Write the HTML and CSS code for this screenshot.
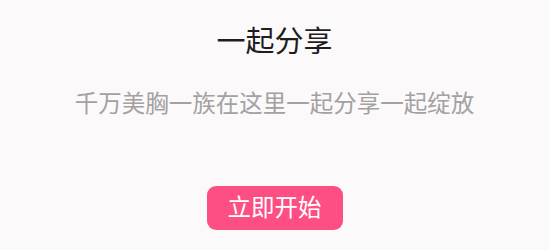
FILE: index.html
```html
<!DOCTYPE html>
<html lang="zh">
<head>
<meta charset="utf-8">
<link rel="stylesheet" href="styles.css">
</head>
<body>
<main class="page">
  <h1 class="title">一起分享</h1>
  <p class="subtitle">千万美胸一族在这里一起分享一起绽放</p>
  <button class="start">立即开始</button>
</main>
</body>
</html>
```
FILE: styles.css
```css
html, body {
  margin: 0;
  padding: 0;
  background: #fcf9fa;
}
body {
  width: 549px;
  height: 250px;
  overflow: hidden;
  font-family: Roboto, "Noto Sans CJK SC", sans-serif;
}
.page {
  display: flex;
  flex-direction: column;
  align-items: center;
  padding-top: 26px;
}
.title {
  margin: 0;
  font-size: 29px;
  line-height: 32px;
  font-weight: 400;
  color: #1e1e1e;
}
.subtitle {
  margin: 30px 0 0;
  font-size: 23.5px;
  line-height: 32px;
  font-weight: 400;
  color: #a3a1a2;
}
.start {
  margin-top: 66px;
  width: 136px;
  height: 44px;
  border: none;
  border-radius: 9px;
  background: #fe4f85;
  color: #ffffff;
  font-family: inherit;
  font-size: 23.5px;
  padding: 0;
  line-height: 44px;
}
```
